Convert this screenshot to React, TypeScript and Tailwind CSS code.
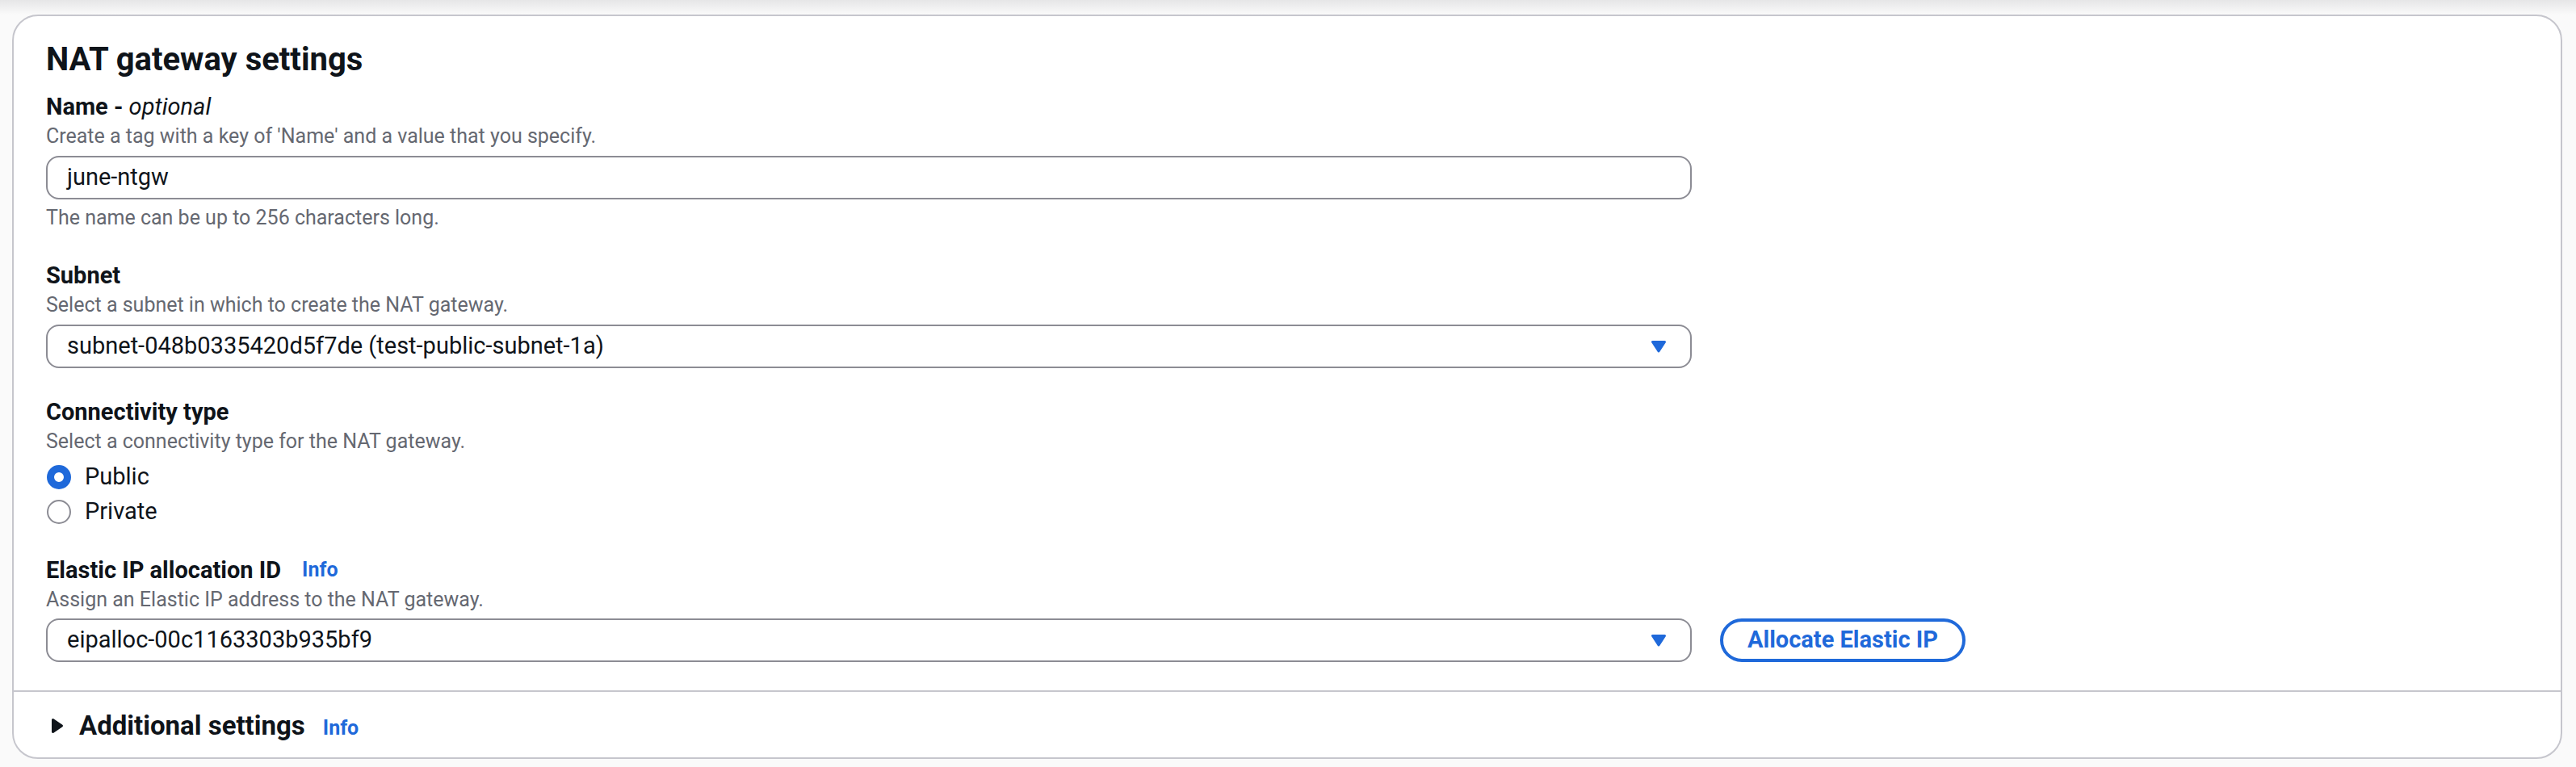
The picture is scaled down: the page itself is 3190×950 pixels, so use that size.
import React from "react";

const BLUE = "text-[#1f69da]";

type FieldProps = {
  label: React.ReactNode;
  description: string;
  info?: boolean;
  className?: string;
  children: React.ReactNode;
};

const Field: React.FunctionComponent<FieldProps> = ({
  label,
  description,
  info,
  className,
  children,
}) => (
  <div className={className}>
    <div className="flex h-[40px] items-center">
      <span className="text-[29px] font-bold leading-[40px]">{label}</span>
      {info && (
        <span className={`ml-[26px] text-[25px] font-bold ${BLUE}`}>Info</span>
      )}
    </div>
    <div className="text-[25px] leading-[34px] text-[#656871]">{description}</div>
    {children}
  </div>
);

const CaretDown = () => (
  <svg width="20" height="16" viewBox="0 0 20 16" className="shrink-0">
    <polygon
      points="2.5,2.5 17.5,2.5 10,14"
      fill="#1f69da"
      stroke="#1f69da"
      strokeWidth="3"
      strokeLinejoin="round"
    />
  </svg>
);

const SelectBox = ({ value }: { value: string }) => (
  <div className="flex h-[54px] w-[2038px] items-center justify-between rounded-[16px] border-2 border-[#8c8c94] bg-white pl-[24px] pr-[29px]">
    <span className="text-[29px]">{value}</span>
    <CaretDown />
  </div>
);

const Radio = ({ label, checked }: { label: string; checked?: boolean }) => (
  <div className="flex h-[43px] items-center">
    <div className="flex w-[32px] justify-center">
      {checked ? (
        <div className="h-[30px] w-[30px] rounded-full border-[9px] border-[#1f69da] bg-white" />
      ) : (
        <div className="h-[30px] w-[30px] rounded-full border-[2.5px] border-[#8c8c94] bg-white" />
      )}
    </div>
    <span className="ml-[16px] text-[29px]">{label}</span>
  </div>
);

export default function App() {
  return (
    <div className="min-h-[950px] bg-[#fafafa] font-[Roboto,sans-serif] text-[#0f141a]">
      <div className="h-[18px] bg-gradient-to-b from-[#e6e6e7] to-[#fafafa]" />
      <div className="ml-[15px] mr-[17px] rounded-[32px] border-2 border-[#c6c6cd] bg-white">
        <div className="px-[40px] pt-[31px] pb-[35px]">
          <h2 className="text-[40px] font-bold leading-[46px]">NAT gateway settings</h2>

          <Field
            className="mt-[15px]"
            label={
              <>
                Name - <i className="font-normal">optional</i>
              </>
            }
            description="Create a tag with a key of 'Name' and a value that you specify."
          >
            <div className="mt-[7px] flex h-[54px] w-[2038px] items-center rounded-[16px] border-2 border-[#8c8c94] bg-white pl-[24px]">
              <span className="text-[29px]">june-ntgw</span>
            </div>
            <div className="mt-[6px] text-[25px] leading-[34px] text-[#656871]">
              The name can be up to 256 characters long.
            </div>
          </Field>

          <Field
            className="mt-[34px]"
            label="Subnet"
            description="Select a subnet in which to create the NAT gateway."
          >
            <div className="mt-[7px]">
              <SelectBox value="subnet-048b0335420d5f7de (test-public-subnet-1a)" />
            </div>
          </Field>

          <Field
            className="mt-[34px]"
            label="Connectivity type"
            description="Select a connectivity type for the NAT gateway."
          >
            <div className="mt-[5px]">
              <Radio label="Public" checked />
              <Radio label="Private" />
            </div>
          </Field>

          <Field
            className="mt-[31px]"
            label="Elastic IP allocation ID"
            info
            description="Assign an Elastic IP address to the NAT gateway."
          >
            <div className="mt-[6px] flex items-center gap-[35px]">
              <SelectBox value="eipalloc-00c1163303b935bf9" />
              <button className="flex h-[54px] items-center rounded-full border-4 border-[#1f69da] px-[30px] text-[29px] font-bold text-[#1f69da]">
                Allocate Elastic IP
              </button>
            </div>
          </Field>
        </div>

        <div className="flex h-[83px] items-center border-t-2 border-[#c6c6cd] pl-[46px] pt-[3px]">
          <svg width="16" height="20" viewBox="0 0 16 20" className="shrink-0">
            <polygon
              points="2.5,2.5 13.5,10 2.5,17.5"
              fill="#0f141a"
              stroke="#0f141a"
              strokeWidth="3"
              strokeLinejoin="round"
            />
          </svg>
          <span className="ml-[19px] text-[33px] font-bold">Additional settings</span>
          <span className={`ml-[22px] mt-[6px] text-[25px] font-bold ${BLUE}`}>Info</span>
        </div>
      </div>
    </div>
  );
}
